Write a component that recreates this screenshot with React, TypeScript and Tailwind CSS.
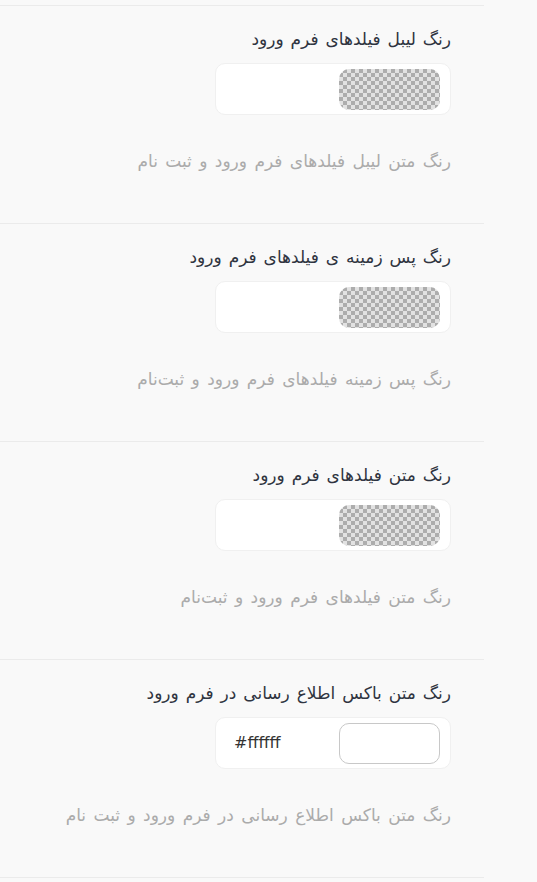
import React from "react";

interface ColorFieldProps {
  title: string;
  description: string;
  value?: string;
}

const ColorField: React.FC<ColorFieldProps> = ({ title, description, value }) => {
  return (
    <div className="border-t border-[#ebebeb] pr-[33px] pt-[23px] pb-[50px]">
      <div className="text-[17px] leading-[20px] text-[#2f3440] [word-spacing:1.5px]">{title}</div>
      <div className="mt-[14px] flex h-[52px] w-[236px] items-center rounded-[10px] border border-[#f0f0f0] bg-white pr-[10px] pl-[18px]">
        {value ? (
          <>
            <div className="h-[41px] w-[101px] rounded-[10px] border border-[#c8c8c8] bg-white" />
            <div dir="ltr" className="mr-auto text-[16px] text-[#333]">
              {value}
            </div>
          </>
        ) : (
          <div className="h-[41px] w-[101px] rounded-[10px] bg-[repeating-conic-gradient(#adadad_0%_25%,#e2e2e2_0%_50%)] bg-[length:8px_8px]" />
        )}
      </div>
      <div className="mt-[34px] text-[17px] leading-[24px] text-[#ababab] [word-spacing:2px]">{description}</div>
    </div>
  );
};

const fields: ColorFieldProps[] = [
  {
    title: "رنگ لیبل فیلدهای فرم ورود",
    description: "رنگ متن لیبل فیلدهای فرم ورود و ثبت نام",
  },
  {
    title: "رنگ پس زمینه ی فیلدهای فرم ورود",
    description: "رنگ پس زمینه فیلدهای فرم ورود و ثبت‌نام",
  },
  {
    title: "رنگ متن فیلدهای فرم ورود",
    description: "رنگ متن فیلدهای فرم ورود و ثبت‌نام",
  },
  {
    title: "رنگ متن باکس اطلاع رسانی در فرم ورود",
    description: "رنگ متن باکس اطلاع رسانی در فرم ورود و ثبت نام",
    value: "#ffffff",
  },
];

export default function App() {
  return (
    <div className="min-h-[882px] w-[537px] bg-[#f9f9f9] pt-[5px] font-['DejaVu_Sans',sans-serif]">
      <div dir="rtl" className="w-[484px]">
        {fields.map((f, i) => (
          <ColorField key={i} {...f} />
        ))}
        <div className="border-t border-[#ebebeb]" />
      </div>
    </div>
  );
}
